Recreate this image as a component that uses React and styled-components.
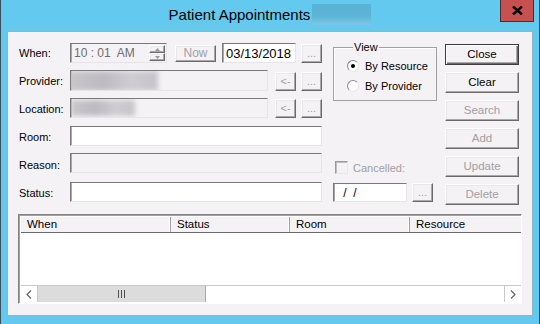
import React from "react";
import styled, { createGlobalStyle, css } from "styled-components";

const sans = `"Liberation Sans", Arial, sans-serif`;

const GlobalStyle = createGlobalStyle`
  html, body {
    margin: 0;
    padding: 0;
    background: #63c9ef;
  }
  * {
    box-sizing: border-box;
  }
`;

const Window = styled.div`
  width: 540px;
  height: 324px;
  background: #63c9ef;
  border-left: 1px solid #36505e;
  border-right: 1px solid #36505e;
  display: flex;
  flex-direction: column;
  overflow: hidden;
  font-family: ${sans};
  font-size: 11px;
  color: #000;
`;

const TitleBar = styled.div`
  height: 31px;
  display: grid;
  grid-template-columns: 1fr auto 1fr;
`;

const TitleGroup = styled.div`
  grid-column: 2;
  display: flex;
  align-items: center;
  padding-bottom: 2px;
`;

const TitleText = styled.span`
  font-size: 15px;
  color: #000;
  margin-right: 2px;
`;

const TitleBlur = styled.span`
  width: 59px;
  height: 21px;
  background: linear-gradient(180deg, #5ab2d4 0%, #5cb6d8 60%, #7cc8e6 100%);
  filter: blur(0.6px);
`;

const CloseButton = styled.div`
  grid-column: 3;
  justify-self: end;
  align-self: start;
  margin-right: 5px;
  width: 34px;
  height: 22px;
  background: #c75050;
  border: 1px solid #4a2e2e;
  border-top: none;
  display: flex;
  align-items: center;
  justify-content: center;
`;

const Client = styled.div`
  margin: 0 6px;
  height: 285px;
  background: #f5f2f6;
  border: 1px solid #8db6ca;
  padding: 11px 11px 0 11px;
`;

const FormGrid = styled.div`
  display: grid;
  grid-template-columns: 51px 252px 11px 104px 8px 74px;
  grid-template-rows: repeat(6, 28px);
  align-items: start;
`;

const Label = styled.div`
  grid-column: 1;
  grid-row: ${(p) => p.$row};
  height: 20px;
  line-height: 20px;
  color: ${(p) => (p.$disabled ? "#a0a0a0" : "#000")};
  white-space: nowrap;
`;

const Cell = styled.div`
  grid-column: ${(p) => p.$col};
  grid-row: ${(p) => p.$row};
  display: flex;
  align-items: center;
  gap: ${(p) => p.$gap || 0}px;
  margin-top: ${(p) => p.$top || 0}px;
`;

const Field = styled.div`
  width: ${(p) => (p.$w ? `${p.$w}px` : "100%")};
  height: ${(p) => p.$h || 20}px;
  flex: none;
  background: ${(p) => (p.$white ? "#ffffff" : "#f5f2f6")};
  border: 1px solid;
  border-color: #7a7a7a #e6e4e8 #e6e4e8 #7a7a7a;
  box-shadow: inset 1px 0 0 #a8a8a8;
  display: flex;
  align-items: center;
  overflow: hidden;
  padding-left: ${(p) => p.$pad ?? 2}px;
  color: ${(p) => p.$color || "#000"};
  font-size: ${(p) => p.$fs || 11}px;
  white-space: pre;
`;

const raised = css`
  background: #f5f2f6;
  border: 1px solid;
  border-color: #ffffff #6a6a6a #6a6a6a #ffffff;
  box-shadow: inset -1px -1px 0 #a9a9a9, inset 1px 1px 0 #e8e8e8;
`;

const Button = styled.div`
  ${raised};
  width: ${(p) => p.$w || 74}px;
  height: ${(p) => p.$h || 21}px;
  flex: none;
  display: flex;
  align-items: ${(p) => (p.$low ? "flex-end" : "center")};
  justify-content: center;
  padding-bottom: ${(p) => (p.$low ? 3 : 1)}px;
  color: ${(p) => (p.$disabled ? "#a0a0a0" : "#000")};
  font-size: ${(p) => p.$fs || 11.5}px;
  ${(p) =>
    p.$default &&
    css`
      border: 1px solid #3c3c3c;
      box-shadow: inset 1px 1px 0 #ffffff, inset -1px -1px 0 #6a6a6a,
        inset -2px -2px 0 #a9a9a9;
    `}
`;

const SideButton = styled(Button)`
  grid-column: 6;
  grid-row: ${(p) => p.$row};
  margin-top: 1px;
`;

const Spin = styled.div`
  margin-left: auto;
  margin-right: 1px;
  width: 16px;
  height: 16px;
  display: flex;
  flex-direction: column;
`;

const SpinHalf = styled.div`
  ${raised};
  flex: 1;
  display: flex;
  align-items: center;
  justify-content: center;
`;

const BlurBlock = styled.span`
  display: inline-block;
  flex: none;
  width: ${(p) => p.$w}px;
  height: ${(p) => p.$h}px;
  margin-left: ${(p) => p.$ml || 0}px;
  background: linear-gradient(90deg, #c9c7cb, #bdbbc0 40%, #cfcdd1 70%, #c6c4c8);
  filter: blur(2.5px);
`;

const GroupBox = styled.fieldset`
  grid-column: 4;
  grid-row: 1 / span 3;
  margin: -2px 0 0 0;
  height: 60px;
  padding: 6px 0 0 13px;
  border: 1px solid #a0a0a0;
  box-shadow: 1px 1px 0 #ffffff inset;
  display: flex;
  flex-direction: column;
  gap: 7px;
`;

const Legend = styled.legend`
  padding: 0 1px;
  margin-left: 6px;
  font-size: 11px;
  line-height: 12px;
`;

const RadioRow = styled.label`
  display: flex;
  align-items: center;
  gap: 6px;
  height: 13px;
  font-size: 11px;
`;

const Radio = styled.span`
  width: 12px;
  height: 12px;
  border-radius: 50%;
  background: #ffffff;
  border: 1px solid;
  border-color: #8a8a8a #e8e8e8 #e8e8e8 #8a8a8a;
  display: flex;
  align-items: center;
  justify-content: center;
  &::after {
    content: "";
    width: 4px;
    height: 4px;
    border-radius: 50%;
    background: ${(p) => (p.$on ? "#000" : "transparent")};
  }
`;

const CheckRow = styled.div`
  grid-column: 4;
  grid-row: 5;
  margin-top: 6px;
  display: flex;
  align-items: center;
  gap: 5px;
  color: #a0a0a0;
  font-size: 11px;
  padding-left: 2px;
`;

const CheckBox = styled.span`
  width: 13px;
  height: 13px;
  background: #f5f2f6;
  border: 1px solid;
  border-color: #9a9a9a #e8e8e8 #e8e8e8 #9a9a9a;
  box-shadow: inset 1px 1px 0 #c0c0c0;
`;

const ListView = styled.div`
  margin: 3px -1px 0 -1px;
  height: 90px;
  border: 1px solid;
  border-color: #828282 #ffffff #ffffff #828282;
  box-shadow: inset 1px 1px 0 #a0a0a0;
  background: #ffffff;
  padding: 2px 0 0 2px;
  display: flex;
  flex-direction: column;
`;

const Header = styled.div`
  display: flex;
  height: 16px;
  background: #f5f2f6;
  border-bottom: 1px solid #696969;
`;

const HeaderCell = styled.div`
  width: ${(p) => (p.$w ? `${p.$w}px` : "auto")};
  flex: ${(p) => (p.$w ? "none" : 1)};
  padding-left: 6px;
  line-height: 15px;
  font-size: 11.5px;
  border-right: ${(p) => (p.$w ? "1px solid #a0a0a0" : "none")};
  box-shadow: ${(p) => (p.$w ? "inset -1px 0 0 #ffffff" : "none")};
`;

const ListBody = styled.div`
  flex: 1;
  background: #ffffff;
`;

const ScrollBar = styled.div`
  height: 17px;
  display: flex;
  border-top: 1px solid #c8c8c8;
  margin-bottom: 1px;
`;

const ScrollArrow = styled.div`
  width: 17px;
  flex: none;
  display: flex;
  align-items: center;
  justify-content: center;
  background: #ffffff;
  ${(p) => (p.$left ? "border-right" : "border-left")}: 1px solid #c8c8c8;
`;

const ScrollThumb = styled.div`
  width: 168px;
  flex: none;
  background: #dcdcdc;
  border-right: 1px solid #a8a8a8;
  display: flex;
  align-items: center;
  justify-content: center;
`;

const ScrollTrack = styled.div`
  flex: 1;
  background: #ffffff;
`;

const Dots = () => <span>...</span>;

export default function App() {
  return (
    <>
      <GlobalStyle />
      <Window>
        <TitleBar>
          <TitleGroup>
            <TitleText>Patient Appointments</TitleText>
            <TitleBlur />
          </TitleGroup>
          <CloseButton>
            <svg width="11" height="9" viewBox="0 0 11 9">
              <path d="M1 0.5 L10 8.5 M10 0.5 L1 8.5" stroke="#000" strokeWidth="2.4" />
            </svg>
          </CloseButton>
        </TitleBar>

        <Client>
          <FormGrid>
            <Label $row={1}>When:</Label>
            <Cell $col={2} $row={1}>
              <Field $w={97} $color="#6d6d6d" $fs={12} $pad={3}>
                {"10 : 01  AM"}
                <Spin>
                  <SpinHalf>
                    <svg width="5" height="3" viewBox="0 0 5 3">
                      <path d="M2.5 0 L5 3 L0 3 Z" fill="#9a9a9a" />
                    </svg>
                  </SpinHalf>
                  <SpinHalf>
                    <svg width="5" height="3" viewBox="0 0 5 3">
                      <path d="M0 0 L5 0 L2.5 3 Z" fill="#9a9a9a" />
                    </svg>
                  </SpinHalf>
                </Spin>
              </Field>
              <Button $w={41} $h={17} $disabled $fs={12} style={{ marginLeft: 8 }}>
                Now
              </Button>
              <Field $w={74} $white $fs={13} $pad={3} style={{ marginLeft: 6 }}>
                03/13/2018
              </Field>
              <Button $w={21} $h={19} $disabled $low $fs={11} style={{ marginLeft: 5 }}>
                <Dots />
              </Button>
            </Cell>

            <Label $row={2}>Provider:</Label>
            <Cell $col={2} $row={2} $top={-1}>
              <Field $w={198} $h={21} $pad={0}>
                <BlurBlock $w={91} $h={20} $ml={-4} />
              </Field>
              <Button $w={21} $h={19} $disabled $fs={11} style={{ marginLeft: 7, marginTop: 2 }}>
                {"<-"}
              </Button>
              <Button $w={21} $h={19} $disabled $low $fs={11} style={{ marginLeft: 5, marginTop: 2 }}>
                <Dots />
              </Button>
            </Cell>

            <Label $row={3}>Location:</Label>
            <Cell $col={2} $row={3} $top={-1}>
              <Field $w={198} $pad={0}>
                <BlurBlock $w={64} $h={16} />
              </Field>
              <Button $w={21} $h={19} $disabled $fs={11} style={{ marginLeft: 7 }}>
                {"<-"}
              </Button>
              <Button $w={21} $h={19} $disabled $low $fs={11} style={{ marginLeft: 5 }}>
                <Dots />
              </Button>
            </Cell>

            <Label $row={4}>Room:</Label>
            <Cell $col={2} $row={4} $top={-1}>
              <Field $white />
            </Cell>

            <Label $row={5}>Reason:</Label>
            <Cell $col={2} $row={5} $top={-2}>
              <Field />
            </Cell>

            <Label $row={6}>Status:</Label>
            <Cell $col={2} $row={6} $top={-1}>
              <Field $white />
            </Cell>

            <GroupBox>
              <Legend>View</Legend>
              <RadioRow>
                <Radio $on />
                By Resource
              </RadioRow>
              <RadioRow>
                <Radio />
                By Provider
              </RadioRow>
            </GroupBox>

            <CheckRow>
              <CheckBox />
              Cancelled:
            </CheckRow>

            <Cell $col={4} $row={6}>
              <Field $w={74} $h={19} $white $fs={12} $pad={6} $color="#000">
                {" /  /"}
              </Field>
              <Button $w={21} $h={19} $disabled $low $fs={11} style={{ marginLeft: 5 }}>
                <Dots />
              </Button>
            </Cell>

            <SideButton $row={1} $default>Close</SideButton>
            <SideButton $row={2}>Clear</SideButton>
            <SideButton $row={3} $disabled>Search</SideButton>
            <SideButton $row={4} $disabled>Add</SideButton>
            <SideButton $row={5} $disabled>Update</SideButton>
            <SideButton $row={6} $disabled>Delete</SideButton>
          </FormGrid>

          <ListView>
            <Header>
              <HeaderCell $w={150}>When</HeaderCell>
              <HeaderCell $w={119}>Status</HeaderCell>
              <HeaderCell $w={120}>Room</HeaderCell>
              <HeaderCell>Resource</HeaderCell>
            </Header>
            <ListBody />
            <ScrollBar>
              <ScrollArrow $left>
                <svg width="6" height="9" viewBox="0 0 6 9">
                  <path d="M5 0.5 L1 4.5 L5 8.5" fill="none" stroke="#606060" strokeWidth="1.2" />
                </svg>
              </ScrollArrow>
              <ScrollThumb>
                <svg width="7" height="8" viewBox="0 0 7 8">
                  <path d="M0.5 0 V8 M3.5 0 V8 M6.5 0 V8" stroke="#505050" strokeWidth="1" />
                </svg>
              </ScrollThumb>
              <ScrollTrack />
              <ScrollArrow>
                <svg width="6" height="9" viewBox="0 0 6 9">
                  <path d="M1 0.5 L5 4.5 L1 8.5" fill="none" stroke="#606060" strokeWidth="1.2" />
                </svg>
              </ScrollArrow>
            </ScrollBar>
          </ListView>
        </Client>
      </Window>
    </>
  );
}
